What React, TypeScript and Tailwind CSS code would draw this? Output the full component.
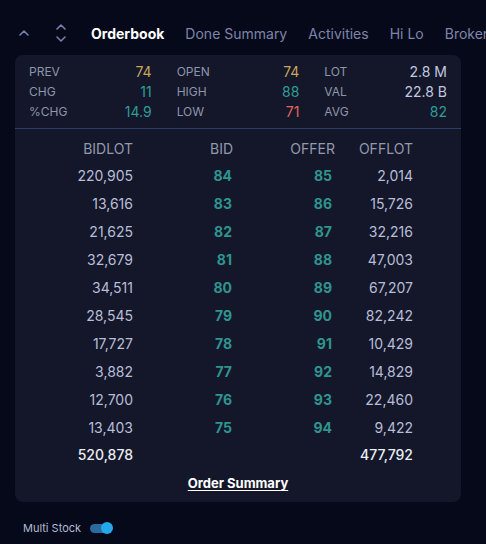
import React from "react";

const stats: [string, string, string][][] = [
  [
    ["PREV", "74", "text-[#c9a45c]"],
    ["OPEN", "74", "text-[#c9a45c]"],
    ["LOT", "2.8 M", "text-[#c3c7e0]"],
  ],
  [
    ["CHG", "11", "text-[#2f9c98]"],
    ["HIGH", "88", "text-[#2f9c98]"],
    ["VAL", "22.8 B", "text-[#c3c7e0]"],
  ],
  [
    ["%CHG", "14.9", "text-[#2f9c98]"],
    ["LOW", "71", "text-[#e2655c]"],
    ["AVG", "82", "text-[#2f9c98]"],
  ],
];

const rows: [string, string, string, string][] = [
  ["220,905", "84", "85", "2,014"],
  ["13,616", "83", "86", "15,726"],
  ["21,625", "82", "87", "32,216"],
  ["32,679", "81", "88", "47,003"],
  ["34,511", "80", "89", "67,207"],
  ["28,545", "79", "90", "82,242"],
  ["17,727", "78", "91", "10,429"],
  ["3,882", "77", "92", "14,829"],
  ["12,700", "76", "93", "22,460"],
  ["13,403", "75", "94", "9,422"],
];

function ChevUp({ className }: { className?: string }) {
  return (
    <svg width="10" height="6" viewBox="0 0 10 6" className={className}>
      <path d="M1 5 L5 1 L9 5" fill="none" stroke="#7680b0" strokeWidth="1.6" strokeLinecap="round" strokeLinejoin="round" />
    </svg>
  );
}
function ChevDown({ className }: { className?: string }) {
  return (
    <svg width="10" height="6" viewBox="0 0 10 6" className={className}>
      <path d="M1 1 L5 5 L9 1" fill="none" stroke="#7680b0" strokeWidth="1.6" strokeLinecap="round" strokeLinejoin="round" />
    </svg>
  );
}

export default function App() {
  return (
    <div
      className="w-[486px] h-[544px] overflow-hidden bg-[#060919] text-[#c3c7e0]"
      style={{ fontFamily: "Inter, 'Noto Sans', sans-serif" }}
    >
      {/* Tabs */}
      <div className="mt-[11px] h-[44px] flex items-center whitespace-nowrap overflow-hidden">
        <div className="ml-[19px] w-[10px] flex items-center">
          <ChevUp />
        </div>
        <div className="ml-[27px] flex flex-col items-center gap-[6px]">
          <ChevUp />
          <ChevDown />
        </div>
        <div className="ml-[25px] flex items-center gap-[21px] text-[14px]">
          <span className="font-bold text-white">Orderbook</span>
          <span className="text-[#7d85aa]">Done Summary</span>
          <span className="text-[#7d85aa]">Activities</span>
          <span className="text-[#7d85aa]">Hi Lo</span>
          <span className="text-[#7d85aa]">Broker</span>
        </div>
      </div>

      {/* Panel */}
      <div className="ml-[15px] w-[446px] h-[447px] rounded-[8px] bg-[#131729] flex flex-col">
        <div className="px-[14px] pt-[6px] pb-[7px] flex flex-col">
          {stats.map((r, i) => (
            <div key={i} className="h-[20px] grid grid-cols-3 gap-x-[25px] items-center">
              {r.map(([l, v, c]) => (
                <div key={l} className="flex justify-between items-center">
                  <span className="text-[12px] text-[#8f95ab]">{l}</span>
                  <span className={`text-[14px] ${c}`}>{v}</span>
                </div>
              ))}
            </div>
          ))}
        </div>
        <div className="h-px bg-[#2b3d68]" />
        <div className="pt-[6px] grid grid-cols-[118px_100px_102px_78px] text-[14px]">
          <div className="h-[26px] flex items-center justify-end text-[#9398ae]">BIDLOT</div>
          <div className="h-[26px] flex items-center justify-end text-[#9398ae]">BID</div>
          <div className="h-[26px] flex items-center justify-end text-[#9398ae]">OFFER</div>
          <div className="h-[26px] flex items-center justify-end text-[#9398ae]">OFFLOT</div>
          {rows.map(([a, b, c, d]) => (
            <React.Fragment key={a}>
              <div className="h-[28px] flex items-center justify-end text-[#b9bdd8]">{a}</div>
              <div className="h-[28px] flex items-center justify-end pr-[1px] font-bold text-[#2f9490]">{b}</div>
              <div className="h-[28px] flex items-center justify-end pr-[3px] font-bold text-[#2f9490]">{c}</div>
              <div className="h-[28px] flex items-center justify-end text-[#b9bdd8]">{d}</div>
            </React.Fragment>
          ))}
          <div className="h-[26px] flex items-center justify-end font-medium text-[#eceef5]">520,878</div>
          <div className="h-[26px]" />
          <div className="h-[26px]" />
          <div className="h-[26px] flex items-center justify-end font-medium text-[#eceef5]">477,792</div>
        </div>
        <div className="h-[34px] flex items-center justify-center">
          <span className="text-[13px] font-bold text-white underline underline-offset-2">Order Summary</span>
        </div>
      </div>

      {/* Multi Stock */}
      <div className="mt-[16px] h-[20px] pl-[23px] flex items-center gap-[9px]">
        <span className="text-[11px] text-[#b3bad4]">Multi Stock</span>
        <div className="relative w-[23px] h-[12px] flex items-center">
          <div className="w-[20px] h-[9px] rounded-full bg-[#2a6a9c]" />
          <div className="absolute right-0 top-0 w-[12px] h-[12px] rounded-full bg-[#24a8ea]" />
        </div>
      </div>
    </div>
  );
}
